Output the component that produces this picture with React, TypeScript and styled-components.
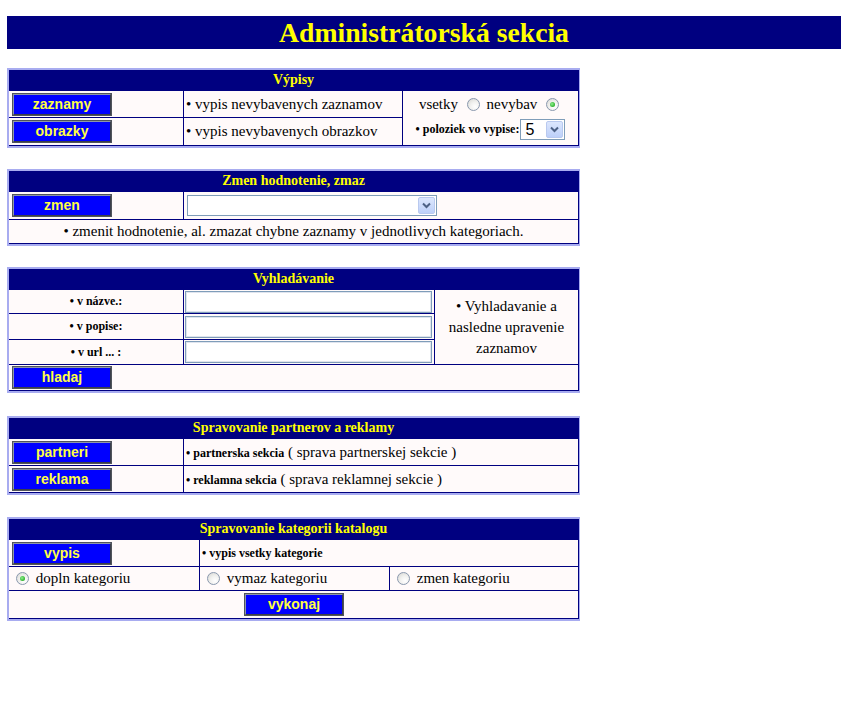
import React from "react";
import styled, { createGlobalStyle, css } from "styled-components";

const NAVY = "#000080";
const LAV = "#a8acf0";
const SNOW = "#fffafa";
const SERIF = `"Liberation Serif", "Times New Roman", serif`;

const GlobalStyle = createGlobalStyle`
  html, body { margin: 0; padding: 0; background: #ffffff; }
  body {
    font-family: ${SERIF};
    font-size: 15px;
    color: #000000;
  }
`;

const Page = styled.div`
  padding: 16px 5px 0 7px;
  display: flex;
  flex-direction: column;
  align-items: flex-start;
`;

const TitleBar = styled.h1`
  margin: 0;
  width: 100%;
  height: 33px;
  background: ${NAVY};
  color: #ffff00;
  font: bold 27.7px/33px ${SERIF};
  text-align: center;
`;

const Panel = styled.section<{ $cols: string; $rows: string; $mt: number }>`
  margin-top: ${(p) => p.$mt}px;
  width: 573px;
  box-sizing: border-box;
  display: grid;
  grid-template-columns: ${(p) => p.$cols};
  grid-template-rows: ${(p) => p.$rows};
  gap: 1px;
  background: ${NAVY};
  padding: 0 1px 1px 0;
  border-style: solid;
  border-color: ${LAV};
  border-width: 2px 1px 2px 2px;
`;

const Header = styled.div`
  grid-column: 1 / -1;
  background: ${NAVY};
  color: #ffff00;
  font: bold 14px/20px ${SERIF};
  text-align: center;
`;

const Cell = styled.div<{ $col?: string; $row?: string; $center?: boolean }>`
  background: ${SNOW};
  display: flex;
  align-items: center;
  justify-content: ${(p) => (p.$center ? "center" : "flex-start")};
  padding: 0 2px;
  white-space: nowrap;
  font-family: ${SERIF};
  font-size: 15px;
  ${(p) => p.$col && css`grid-column: ${p.$col};`}
  ${(p) => p.$row && css`grid-row: ${p.$row};`}
`;

const Inline = styled.span`
  white-space: pre;
`;

const SplitCell = styled.div`
  grid-column: 3;
  grid-row: 2 / span 2;
  background: ${SNOW};
  display: grid;
  grid-template-rows: 27px 27px;
  justify-items: center;
  align-items: center;
  font-family: ${SERIF};
`;

const Line = styled.div<{ $shift?: number }>`
  display: flex;
  align-items: center;
  white-space: pre;
  margin-top: ${(p) => p.$shift ?? 0}px;
`;

const NoteCell = styled.div`
  grid-column: 3;
  grid-row: 2 / span 3;
  background: ${SNOW};
  display: flex;
  align-items: center;
  justify-content: center;
  text-align: center;
  line-height: 21px;
  padding: 0 4px;
  font-family: ${SERIF};
`;

const Btn = styled.button`
  width: 100px;
  height: 23px;
  margin-left: 1px;
  padding: 0;
  box-sizing: border-box;
  background: #0000ff;
  color: #ffff44;
  font: bold 14px/19px "Liberation Sans", Arial, sans-serif;
  border: 2px solid;
  border-color: #8e96a8 #3a3e4a #3a3e4a #8e96a8;
  outline: 1px solid #50545c;
  outline-offset: -1px;
  cursor: pointer;
`;

const Small = styled.span`
  font-weight: bold;
  font-size: 12px;
`;

const Radio = styled.span<{ $on?: boolean }>`
  display: inline-block;
  position: relative;
  width: 13px;
  height: 13px;
  box-sizing: border-box;
  border-radius: 50%;
  border: 1px solid #8a98ae;
  background: radial-gradient(circle at 65% 70%, #ffffff 0%, #f1f1ef 45%, #d4d4d0 100%);
  margin: 0 3px 0 5px;
  vertical-align: -2px;
  ${(p) =>
    p.$on &&
    css`
      &::after {
        content: "";
        position: absolute;
        left: 3px;
        top: 3px;
        width: 5px;
        height: 5px;
        border-radius: 50%;
        background: radial-gradient(circle at 40% 40%, #8ef08e 0%, #2eb12e 70%, #1f8f1f 100%);
      }
    `}
`;

const SelectBox = styled.div<{ $w: number }>`
  width: ${(p) => p.$w}px;
  height: 21px;
  box-sizing: border-box;
  border: 1px solid #7f9db9;
  background: #ffffff;
  display: flex;
  align-items: center;
  justify-content: space-between;
  padding: 1px 1px 1px 4px;
  font: 16px/17px "Liberation Sans", Arial, sans-serif;
  margin-left: 1px;
`;

const SelectArrow = styled.span`
  width: 17px;
  height: 17px;
  box-sizing: border-box;
  border: 1px solid #b9c9ef;
  border-radius: 2px;
  background: linear-gradient(#dce6fd, #bdd0f9);
  display: flex;
  align-items: center;
  justify-content: center;
`;

const TextInput = styled.input`
  width: 249px;
  height: 22px;
  margin: 0 0 0 -1px;
  box-sizing: border-box;
  border: 1px solid #7f9db9;
  box-shadow: inset 0 0 0 1px #dfe4ee;
  background: #ffffff;
  padding: 0 3px;
  font: 14px "Liberation Sans", Arial, sans-serif;
`;

const Arrow = () => (
  <SelectArrow>
    <svg width="9" height="7" viewBox="0 0 9 7">
      <path d="M1 1.5 L4.5 5 L8 1.5" fill="none" stroke="#4d6185" strokeWidth="2" />
    </svg>
  </SelectArrow>
);

export default function App() {
  return (
    <>
      <GlobalStyle />
      <Page>
        <TitleBar>Administrátorská sekcia</TitleBar>

        <Panel $cols="174px 218px 175px" $rows="20px 26px 27px" $mt={19}>
          <Header>Výpisy</Header>
          <Cell><Btn>zaznamy</Btn></Cell>
          <Cell>• vypis nevybavenych zaznamov</Cell>
          <SplitCell>
            <Line>vsetky <Radio /> nevybav <Radio $on /></Line>
            <Line $shift={-4}>
              <Small>• poloziek vo vypise:</Small> <SelectBox $w={45}>5<Arrow /></SelectBox>
            </Line>
          </SplitCell>
          <Cell><Btn>obrazky</Btn></Cell>
          <Cell>• vypis nevybavenych obrazkov</Cell>
        </Panel>

        <Panel $cols="174px 394px" $rows="20px 27px 23px" $mt={21}>
          <Header>Zmen hodnotenie, zmaz</Header>
          <Cell><Btn>zmen</Btn></Cell>
          <Cell><SelectBox $w={250}><span /><Arrow /></SelectBox></Cell>
          <Cell $col="1 / -1" $center>• zmenit hodnotenie, al. zmazat chybne zaznamy v jednotlivych kategoriach.</Cell>
        </Panel>

        <Panel $cols="174px 250px 143px" $rows="20px 23px 25px 24px 25px" $mt={21}>
          <Header>Vyhladávanie</Header>
          <Cell $center><Small>• v názve.:</Small></Cell>
          <Cell><TextInput /></Cell>
          <NoteCell>• Vyhladavanie a nasledne upravenie zaznamov</NoteCell>
          <Cell $center><Small>• v popise:</Small></Cell>
          <Cell><TextInput /></Cell>
          <Cell $center><Small>• v url ... :</Small></Cell>
          <Cell><TextInput /></Cell>
          <Cell $col="1 / -1"><Btn>hladaj</Btn></Cell>
        </Panel>

        <Panel $cols="174px 394px" $rows="20px 26px 26px" $mt={23}>
          <Header>Spravovanie partnerov a reklamy</Header>
          <Cell><Btn>partneri</Btn></Cell>
          <Cell><Inline><Small>• partnerska sekcia</Small> ( sprava partnerskej sekcie )</Inline></Cell>
          <Cell><Btn>reklama</Btn></Cell>
          <Cell><Inline><Small>• reklamna sekcia</Small> ( sprava reklamnej sekcie )</Inline></Cell>
        </Panel>

        <Panel $cols="190px 189px 188px" $rows="20px 26px 23px 27px" $mt={22}>
          <Header>Spravovanie kategorii katalogu</Header>
          <Cell><Btn>vypis</Btn></Cell>
          <Cell $col="2 / span 2"><Small>• vypis vsetky kategorie</Small></Cell>
          <Cell><Inline><Radio $on /> dopln kategoriu</Inline></Cell>
          <Cell><Inline><Radio /> vymaz kategoriu</Inline></Cell>
          <Cell><Inline><Radio /> zmen kategoriu</Inline></Cell>
          <Cell $col="1 / -1" $center><Btn>vykonaj</Btn></Cell>
        </Panel>
      </Page>
    </>
  );
}
